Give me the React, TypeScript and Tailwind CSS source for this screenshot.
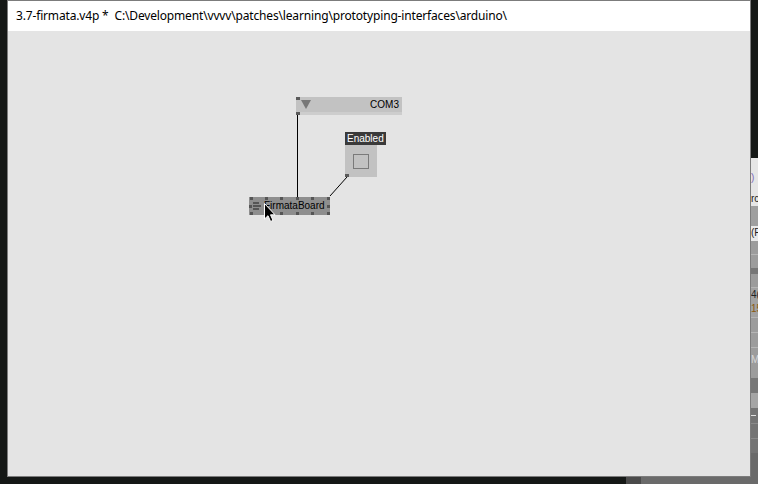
import React from "react"

const title =
  "3.7-firmata.v4p *\u00a0 C:\\Development\\vvvv\\patches\\learning\\prototyping-interfaces\\arduino\\"

function Dot({ className }: { className: string }) {
  return <div className={"absolute w-[3px] h-[3px] bg-[#555555] " + className} />
}

function ComNode() {
  return (
    <div className="absolute left-[288px] top-[66px] w-[106px] h-[18px] bg-[#c2c2c2]">
      <div className="h-[15px] flex items-center justify-between pl-[5px] pr-[3px]">
        <svg width="10" height="9" viewBox="0 0 10 9">
          <path d="M0 0 H10 L5 9 Z" fill="#777777" />
        </svg>
        <span className="text-[10px] leading-none text-black">COM3</span>
      </div>
      <div className="h-[3px] bg-[#cdcdcd]" />
      <div className="absolute left-0 top-0 w-[4px] h-[3px] bg-[#5a5a5a]" />
      <div className="absolute left-0 bottom-0 w-[4px] h-[3px] bg-[#5a5a5a]" />
    </div>
  )
}

function EnabledToggle() {
  return (
    <div className="absolute left-[337px] top-[101px] flex flex-col items-start">
      <div className="h-[13px] px-[2px] bg-[#3a3a3a] text-white text-[10px] leading-[13px]">Enabled</div>
      <div className="relative w-[32px] h-[32px] bg-[#c2c2c2] flex items-center justify-center">
        <div className="w-[16px] h-[15px] border border-[#7a7a7a]" />
        <div className="absolute left-0 bottom-0 w-[4px] h-[3px] bg-[#5a5a5a]" />
      </div>
    </div>
  )
}

function FirmataNode() {
  return (
    <div className="absolute left-[241px] top-[166px] w-[81px] h-[18px] bg-[#8e8e8e] flex items-center">
      <div className="ml-[4px] flex flex-col gap-[1px]">
        <div className="w-[6px] h-[2px] bg-[#555555]" />
        <div className="w-[8px] h-[2px] bg-[#555555]" />
        <div className="w-[6px] h-[2px] bg-[#555555]" />
      </div>
      <span className="ml-[3px] text-[10px] leading-none text-black">FirmataBoard</span>
      <Dot className="left-[1px] top-0" />
      <Dot className="left-[16px] top-0" />
      <Dot className="left-[31px] top-0" />
      <Dot className="left-[47px] top-0" />
      <Dot className="left-[62px] top-0" />
      <Dot className="left-[78px] top-0" />
      <Dot className="left-[1px] bottom-0" />
      <Dot className="left-[16px] bottom-0" />
      <Dot className="left-[31px] bottom-0" />
      <Dot className="left-[47px] bottom-0" />
      <Dot className="left-[62px] bottom-0" />
      <Dot className="left-[78px] bottom-0" />
      <Dot className="left-0 top-[8px]" />
      <Dot className="right-0 top-[8px]" />
    </div>
  )
}

function Cursor() {
  return (
    <svg className="absolute left-[256px] top-[172px]" width="13" height="20" viewBox="0 0 13 20">
      <path
        d="M0.5 0.5 L0.5 16 L4 12.7 L6.6 18.5 L9 17.4 L6.5 11.8 L11 11.8 Z"
        fill="#000000"
        stroke="#ffffff"
        strokeWidth="1"
        strokeLinejoin="miter"
      />
    </svg>
  )
}

function SideStrip() {
  return (
    <div className="w-[7px] flex flex-col overflow-hidden text-[10px] leading-none font-['Liberation_Sans',sans-serif]">
      <div className="h-[158px] bg-[#151816]" />
      <div className="h-[35px] bg-[#e6e6e6] flex items-end pb-[10px] text-[#7a6ab8]">)</div>
      <div className="h-[13px] bg-[#e6e6e6] text-[#222222] pt-[1px]">rc</div>
      <div className="h-[20px] bg-[#9f9f9f]" />
      <div className="h-[15px] bg-[#e9e9e9] text-[#222222] pt-[2px]">(F</div>
      <div className="h-[14px] bg-[#9c9c9c] border-b border-[#b5b5b5]" />
      <div className="h-[13px] bg-[#9c9c9c]" />
      <div className="h-[6px] bg-[#777777]" />
      <div className="h-[14px] bg-[#9c9c9c] border-b border-[#b5b5b5]" />
      <div className="h-[15px] bg-[#a2a2a2] text-[#222222] pt-[2px]">4(</div>
      <div className="h-[15px] bg-[#a2a2a2] text-[#8a5a10] pt-[1px] border-b border-[#b5b5b5]">15</div>
      <div className="h-[15px] bg-[#9c9c9c] border-b border-[#b5b5b5]" />
      <div className="h-[15px] bg-[#9c9c9c] border-b border-[#b5b5b5]" />
      <div className="h-[30px] bg-[#9c9c9c] text-[#d8d8d8] pt-[7px]">M</div>
      <div className="h-[15px] bg-[#777777]" />
      <div className="h-[15px] bg-[#a5a5a5]" />
      <div className="h-[15px] bg-[#747474] flex items-center">
        <div className="w-[5px] h-[1px] bg-[#e0e0e0]" />
      </div>
      <div className="h-[15px] bg-[#747474] border-t border-[#8a8a8a]" />
      <div className="h-[15px] bg-[#747474] border-t border-[#8a8a8a]" />
      <div className="flex-1 bg-[#6a6a6a]" />
    </div>
  )
}

export default function App() {
  return (
    <div className="w-[758px] h-[484px] bg-[#151816] flex flex-col overflow-hidden font-['Liberation_Sans',sans-serif]">
      <div className="h-[477px] flex">
        <div className="w-[7px]" />
        <div className="w-[744px] flex flex-col border border-[#7c7c7c]">
          <div className="h-[30px] bg-white flex items-center pl-[8px]">
            <span className="whitespace-pre text-[12px] tracking-[-0.16px] text-black font-['Noto_Sans',sans-serif]">{title}</span>
          </div>
          <div className="relative flex-1 bg-[#e4e4e4]">
            <svg className="absolute inset-0" width="742" height="445">
              <line x1="289.5" y1="84" x2="289.5" y2="166" stroke="#000000" strokeWidth="1" />
              <line x1="339" y1="146" x2="322" y2="165" stroke="#000000" strokeWidth="1" />
            </svg>
            <ComNode />
            <EnabledToggle />
            <FirmataNode />
            <Cursor />
          </div>
        </div>
        <SideStrip />
      </div>
      <div className="flex-1 flex">
        <div className="w-[626px]" />
        <div className="w-[15px] bg-[#4a4a4a]" />
        <div className="flex-1 bg-[#6a6a6a]" />
      </div>
    </div>
  )
}
